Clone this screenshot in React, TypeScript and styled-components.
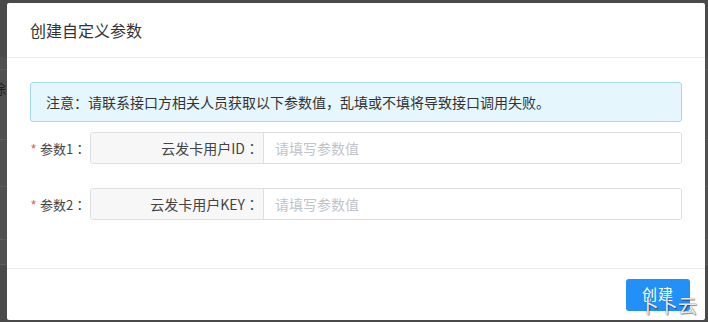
import React from "react";
import styled, { createGlobalStyle } from "styled-components";

const Global = createGlobalStyle`
  html, body { margin: 0; padding: 0; }
  body {
    width: 708px;
    height: 322px;
    overflow: hidden;
    background: #4c4c4c;
    font-family: "Microsoft YaHei", "Noto Sans CJK SC", "Noto Sans", sans-serif;
  }
  * { box-sizing: border-box; }
`;

const Page = styled.div`
  position: relative;
  width: 708px;
  height: 322px;
  display: flex;
  flex-direction: column;
  padding-top: 57px;
  background: #4a4a4a;
`;

const PageRow = styled.div<{ $h: number; $pad?: number }>`
  height: ${(p) => p.$h}px;
  border-bottom: 1px solid #5c5c5c;
  background: #505050;
  display: flex;
  align-items: flex-start;
  padding-top: ${(p) => p.$pad ?? 0}px;
  color: #1e1e1e;
  font-size: 14px;
  line-height: 16px;
  overflow: hidden;
`;

const PageGlyph = styled.span`
  margin-left: -8px;
`;

const Overlay = styled.div`
  position: absolute;
  left: 7px;
  top: 3px;
  width: 698px;
  height: 317px;
  background: #fff;
  border-radius: 2px;
  display: flex;
  flex-direction: column;
`;

const Header = styled.div`
  height: 55px;
  padding: 0 23px;
  display: flex;
  align-items: center;
  border-bottom: 1px solid #ebebeb;
  font-size: 16px;
  color: #333;
`;

const Body = styled.div`
  flex: 1;
  padding: 24px 23px 0;
  display: flex;
  flex-direction: column;
  border-bottom: 1px solid #ebebeb;
`;

const Alert = styled.div`
  height: 40px;
  background: #e5f6fd;
  border: 1px solid #a6d9ea;
  border-radius: 3px;
  padding: 0 15px;
  display: flex;
  align-items: center;
  font-size: 14px;
  color: #333;
  margin-bottom: 10px;
`;

const Row = styled.div`
  display: flex;
  align-items: center;
  height: 32px;
  margin-bottom: 24px;
`;

const Label = styled.label`
  width: 60px;
  flex: none;
  font-size: 13px;
  color: #444;
  display: flex;
  align-items: center;
  padding-left: 1px;
`;

const Colon = styled.span`
  font-family: "Noto Sans CJK JP", "Noto Sans CJK SC", sans-serif;
`;

const Star = styled.span`
  color: #ed4d4d;
  margin-right: 4px;
  font-size: 13px;
  font-family: "Liberation Sans", sans-serif;
`;

const Group = styled.div`
  flex: 1;
  display: flex;
  height: 32px;
  border: 1px solid #dcdee2;
  border-radius: 3px;
  overflow: hidden;
`;

const Addon = styled.div`
  width: 173px;
  flex: none;
  background: #f7f7f7;
  border-right: 1px solid #dcdee2;
  display: flex;
  align-items: center;
  justify-content: flex-end;
  padding-right: 4px;
  font-size: 14px;
  color: #444;
`;

const Input = styled.input`
  flex: 1;
  border: none;
  outline: none;
  padding: 0 11px;
  font-size: 14px;
  font-family: inherit;
  color: #333;
  background: #fff;
  &::placeholder { color: #c0c4cc; }
`;

const Footer = styled.div`
  height: 51px;
  padding: 0 15px 9px;
  display: flex;
  align-items: flex-end;
  justify-content: flex-end;
  position: relative;
`;

const Button = styled.button`
  width: 64px;
  height: 32px;
  border: none;
  border-radius: 3px;
  background: #2290f6;
  color: #fff;
  font-size: 15px;
  font-family: inherit;
  padding: 0 0 3px;
  display: flex;
  align-items: center;
  justify-content: center;
  letter-spacing: 1px;
`;

const Watermark = styled.div`
  position: absolute;
  right: 8px;
  bottom: 5px;
  font-size: 19px;
  line-height: 20px;
  letter-spacing: 0;
  color: rgba(255, 255, 255, 0.88);
  text-shadow: 0 0 1px #555, 1px 1px 1px rgba(0, 0, 0, 0.45);
  pointer-events: none;
`;

export default function App() {
  return (
    <>
      <Global />
      <Page>
        <PageRow $h={13} />
        <PageRow $h={70} $pad={10}>
          <PageGlyph>除</PageGlyph>
        </PageRow>
        <PageRow $h={47} />
        <PageRow $h={53} $pad={30}>
          <PageGlyph>扌</PageGlyph>
        </PageRow>
        <PageRow $h={25} />
      </Page>
      <Overlay>
        <Header>创建自定义参数</Header>
        <Body>
          <Alert>注意：请联系接口方相关人员获取以下参数值，乱填或不填将导致接口调用失败。</Alert>
          <Row>
            <Label>
              <Star>*</Star>参数1<Colon>：</Colon>
            </Label>
            <Group>
              <Addon>
                云发卡用户ID<Colon>：</Colon>
              </Addon>
              <Input placeholder="请填写参数值" />
            </Group>
          </Row>
          <Row>
            <Label>
              <Star>*</Star>参数2<Colon>：</Colon>
            </Label>
            <Group>
              <Addon>
                云发卡用户KEY<Colon>：</Colon>
              </Addon>
              <Input placeholder="请填写参数值" />
            </Group>
          </Row>
        </Body>
        <Footer>
          <Button>创建</Button>
          <Watermark>卜卜云</Watermark>
        </Footer>
      </Overlay>
    </>
  );
}
